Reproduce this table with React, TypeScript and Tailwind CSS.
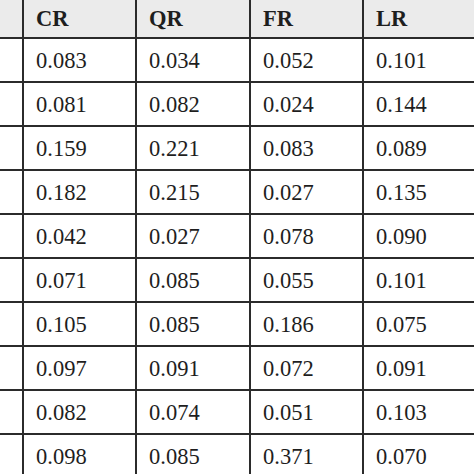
const headers = ["", "CR", "QR", "FR", "LR"];

const rows = [
  ["0.083", "0.034", "0.052", "0.101"],
  ["0.081", "0.082", "0.024", "0.144"],
  ["0.159", "0.221", "0.083", "0.089"],
  ["0.182", "0.215", "0.027", "0.135"],
  ["0.042", "0.027", "0.078", "0.090"],
  ["0.071", "0.085", "0.055", "0.101"],
  ["0.105", "0.085", "0.186", "0.075"],
  ["0.097", "0.091", "0.072", "0.091"],
  ["0.082", "0.074", "0.051", "0.103"],
  ["0.098", "0.085", "0.371", "0.070"],
];

export default function App() {
  return (
    <div
      className="w-[474px] h-[474px] overflow-hidden bg-white"
      style={{ fontFamily: '"Liberation Serif", "Times New Roman", serif' }}
    >
      <div className="grid grid-cols-[22px_111px_112px_111px_1fr] grid-rows-[37px] auto-rows-[42px] gap-[2px] bg-[#2b2b2b] text-[22.5px] text-[#1e1e1e]">
        {headers.map((h, i) => (
          <div key={"h" + i} className="bg-[#ebebeb] flex items-center pl-[12px] pt-[1px] font-bold">
            {h}
          </div>
        ))}
        {rows.map((r, ri) =>
          ["", ...r].map((v, ci) => (
            <div key={ri + "-" + ci} className="bg-white flex items-center pl-[12px] pt-[2px]">
              {v}
            </div>
          ))
        )}
      </div>
    </div>
  );
}
